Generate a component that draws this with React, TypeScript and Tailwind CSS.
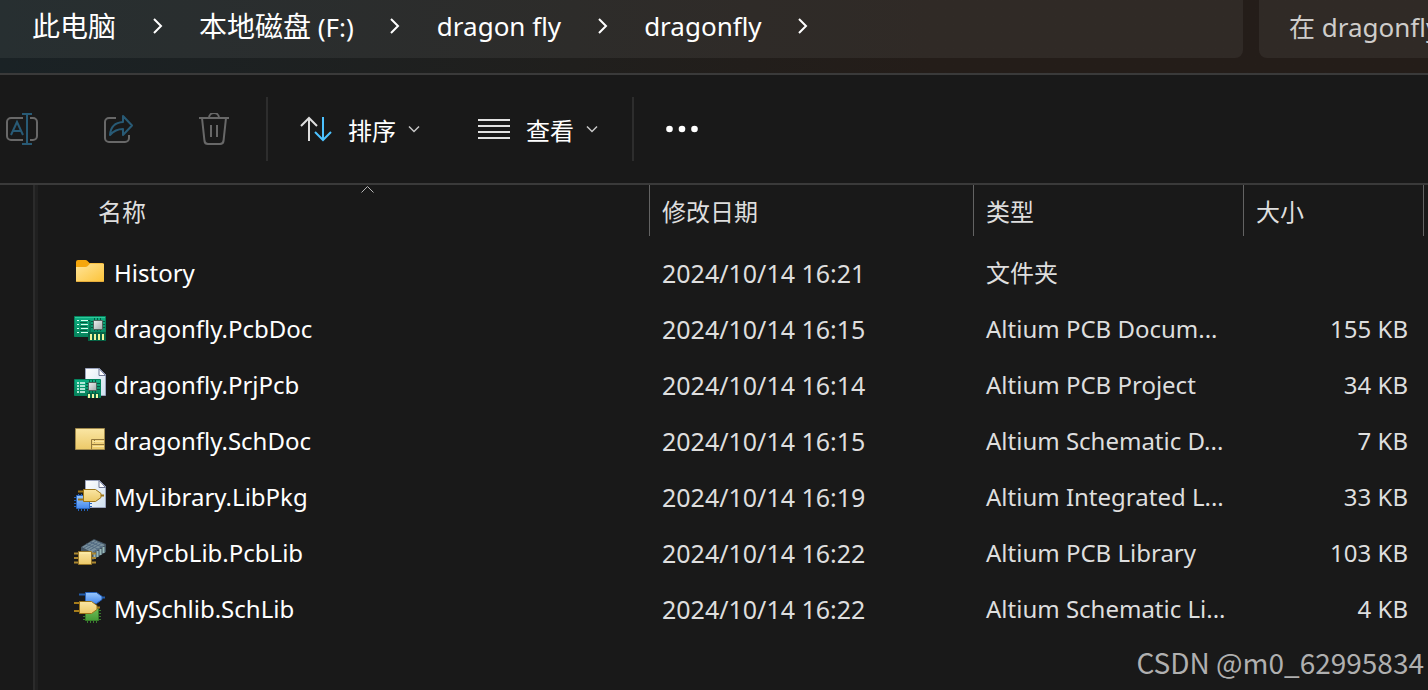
import React from 'react';

type IconName = 'folder' | 'pcbDoc' | 'project' | 'schDoc' | 'libPkg' | 'pcbLib' | 'schLib';

interface FileEntry {
  name: string;
  modified: string;
  type: string;
  size: string;
  icon: IconName;
}

const files: FileEntry[] = [
  { name: 'History', modified: '2024/10/14 16:21', type: '文件夹', size: '', icon: 'folder' },
  { name: 'dragonfly.PcbDoc', modified: '2024/10/14 16:15', type: 'Altium PCB Docum...', size: '155 KB', icon: 'pcbDoc' },
  { name: 'dragonfly.PrjPcb', modified: '2024/10/14 16:14', type: 'Altium PCB Project', size: '34 KB', icon: 'project' },
  { name: 'dragonfly.SchDoc', modified: '2024/10/14 16:15', type: 'Altium Schematic D...', size: '7 KB', icon: 'schDoc' },
  { name: 'MyLibrary.LibPkg', modified: '2024/10/14 16:19', type: 'Altium Integrated L...', size: '33 KB', icon: 'libPkg' },
  { name: 'MyPcbLib.PcbLib', modified: '2024/10/14 16:22', type: 'Altium PCB Library', size: '103 KB', icon: 'pcbLib' },
  { name: 'MySchlib.SchLib', modified: '2024/10/14 16:22', type: 'Altium Schematic Li...', size: '4 KB', icon: 'schLib' },
];

const Page = () => (
  <>
    <path d="M11.5.5h14l6 6v21h-20z" fill="url(#paper)" stroke="#9aa3bd" />
    <path d="M25 .5v7h6.5z" fill="#fff" stroke="#6f7896" />
  </>
);

const fileIcons: Record<IconName, React.ReactNode> = {
  folder: (
    <>
      <path d="M2 6a2 2 0 0 1 2-2h7.5c.8 0 1.300.3 1.800.8L15.500 7H28a2 2 0 0 1 2 2v4H2z" fill="#f5a60c" />
      <path d="M2 11h9.500c.8 0 1.400-.3 2-.8l2.200-2.200c.4-.4.8-.5 1.300-.5H29a1 1 0 0 1 1 1V25a1 1 0 0 1-1 1H3a1 1 0 0 1-1-1z" fill="url(#folderFront)" />
      <path d="M2.500 25.500h27" stroke="#e7ad3c" />
    </>
  ),
  pcbDoc: (
    <>
      <path d="M.5 4.500h31v24h-17v-4H.5z" fill="url(#board)" stroke="#04845e" />
      <path d="M1 5.500h30" stroke="#31c89a" />
      <path d="M3 8.500h2M3 12.500h2M3 16.500h2M3 20.500h2M7 8.500h7M7 12.500h7M7 16.500h7M7 20.500h7" stroke="#d9fff0" />
      <path d="M14 8.500h2v12h-2M6 10.500h7M6 14.500h7M6 18.500h7" stroke="#035c40" fill="none" />
      <path d="M17 9.500h14M17 12.500h14M17 15.500h14M20.500 6v13M23.500 6v13M26.500 6v13" stroke="#045a40" />
      <path d="M19.500 8.500h9v9h-9z" fill="url(#silver)" stroke="#50665e" />
      <path d="M14 20h18v9H14z" fill="#066345" />
      <path d="M17 22v6M21 22v6M25 22v6M29 22v6" stroke="#edf39a" strokeWidth="2" />
    </>
  ),
  project: (
    <>
      <Page />
      <path d="M.5 11.500h26v18h-13v-2H.5z" fill="url(#board)" stroke="#04845e" />
      <path d="M3 15h2M3 18h2M3 21h2M3 24h2M6 15h5M6 18h5M6 21h5M6 24h5" stroke="#e7fff6" strokeWidth="1.500" />
      <path d="M12 15.500h14M12 18.500h14M12 21.500h14M15.500 12v13M18.500 12v13M21.500 12v13" stroke="#045a40" />
      <path d="M14.500 14.500h8v8h-8z" fill="url(#silver)" stroke="#50665e" />
      <path d="M13 25h12v5H13z" fill="#066345" />
      <path d="M15 26v4M19 26v4M23 26v4" stroke="#f2f6a6" strokeWidth="2" />
    </>
  ),
  schDoc: (
    <>
      <path d="M1.500 4.500h29v21h-29z" fill="url(#gold)" stroke="#a18a4c" />
      <path d="M17.500 25.500v-10h13M17.500 20.500h13M20.500 18.500v-3" fill="none" stroke="#94793c" />
      <path d="M19 17.500h11M19 22.500h11" stroke="#f9e6a3" />
    </>
  ),
  libPkg: (
    <>
      <Page />
      <path d="M4.500 14v17M7.500 14v17M10.500 14v17M13.500 14v17M0 17.500h18M0 20.500h18M0 23.500h18M0 26.500h18" stroke="#2462b8" />
      <path d="M2.500 15.500h13v13h-13z" fill="url(#blue)" stroke="#2864bd" />
      <path d="M4 11.500h7M4 19.500h7M25 15.500h5" stroke="#9b7418" strokeWidth="2" />
      <path d="M9.500 9.500h12l5.500 4v4l-5.500 4h-12z" fill="url(#gold)" stroke="#9b7418" />
    </>
  ),
  pcbLib: (
    <>
      <path d="M7 11 20 3l12 5v8l-13 8-12-6z" fill="#435361" />
      <path d="m8 11 12-7 11 5-12 8z" fill="#79909c" />
      <path d="m10 12 12-7m-9 8 12-7m-9 8 12-7m-9 9 10-6M16 6l12 5M12 8l12 5" stroke="#536b83" />
      <path d="M20.500 17v6M23.500 15v6M26.500 13v6M29.500 11v6" stroke="#96b7b7" strokeWidth="2" />
      <path d="M0 17.500h22M0 22h22M0 26.500h22" stroke="#ab8730" strokeWidth="2" />
      <path d="M4.500 15.500h13v13h-13z" fill="url(#gold)" stroke="#967526" />
      <path d="M6 17h10" stroke="#fff0a8" />
    </>
  ),
  schLib: (
    <>
      <path d="M5 2.500h7M25 5.500h6" stroke="#225dac" strokeWidth="2" />
      <path d="M11.500.5h11l5.500 4v3l-5.500 4h-11z" fill="url(#blue)" stroke="#2864bd" />
      <path d="M13.500 15v16M16.500 15v16M19.500 15v16M22.500 15v16M9 18.500h18M9 21.500h18M9 24.500h18M9 27.500h18" stroke="#397b2e" />
      <path d="M11.500 16.500h13v12h-13z" fill="url(#green)" stroke="#367d29" />
      <path d="M0 11h7M0 19h7M20 15.500h6" stroke="#a77d1b" strokeWidth="2" />
      <path d="M5.500 9.500h12l5.500 4v4l-5.500 4h-12z" fill="url(#gold)" stroke="#9b7418" />
    </>
  ),
};

// gradients shared by all file icons
const IconDefs = () => (
  <svg className="absolute size-0" aria-hidden="true">
    <defs>
      <linearGradient id="paper" x2="1" y2="1"><stop stopColor="#fff" /><stop offset="1" stopColor="#cfe0ef" /></linearGradient>
      <linearGradient id="folderFront" x2="1" y2="1"><stop stopColor="#ffe59a" /><stop offset="1" stopColor="#fcc338" /></linearGradient>
      <linearGradient id="board" x2="0" y2="1"><stop stopColor="#0eb083" /><stop offset="1" stopColor="#067a54" /></linearGradient>
      <linearGradient id="silver" x2="1" y2="1"><stop stopColor="#eef0f0" /><stop offset="1" stopColor="#a3adad" /></linearGradient>
      <linearGradient id="gold" x2="0" y2="1"><stop stopColor="#fae6a4" /><stop offset="1" stopColor="#ecc968" /></linearGradient>
      <linearGradient id="blue" x2="0" y2="1"><stop stopColor="#9ac8fc" /><stop offset="1" stopColor="#4589ed" /></linearGradient>
      <linearGradient id="green" x2="0" y2="1"><stop stopColor="#70bd59" /><stop offset="1" stopColor="#459b36" /></linearGradient>
    </defs>
  </svg>
);

const Crumb = ({ children }: { children: React.ReactNode }) => (
  <button className="shrink-0 whitespace-nowrap leading-8">{children}</button>
);

const CrumbArrow = () => (
  <div className="flex w-[83px] shrink-0 justify-center">
    <svg className="h-4 w-3" viewBox="0 0 12 16" fill="none" stroke="#fff" strokeWidth="2">
      <path d="m2 1 7 7-7 7" />
    </svg>
  </div>
);

const ChevronDown = () => (
  <svg className="h-3 w-3" viewBox="0 0 12 12" fill="none" stroke="#c8c8c8" strokeWidth="1.500">
    <path d="m1 3.500 5 5 5-5" />
  </svg>
);

const AddressBar = () => (
  <header className="flex h-[75px] gap-4 border-b-2 border-[#3a3a3a] bg-linear-to-r from-[#1a2225] via-[#201f1d] via-40% to-[#241d19] to-65%">
    <nav className="flex h-[58px] min-w-0 flex-1 items-center rounded-br-lg bg-white/6 pb-1.5 pl-8 text-[26px] text-white">
      <Crumb><span className="text-[28px]">此电脑</span></Crumb>
      <CrumbArrow />
      <Crumb><span className="text-[28px]">本地磁盘</span> (F:)</Crumb>
      <CrumbArrow />
      <Crumb>dragon fly</Crumb>
      <CrumbArrow />
      <Crumb>dragonfly</Crumb>
      <CrumbArrow />
    </nav>
    <input
      type="text"
      aria-label="搜索"
      placeholder="在 dragonfly 中搜索"
      className="h-[58px] w-[169px] rounded-bl-lg bg-white/6 pb-1 pl-[30px] text-[26px] text-white outline-none placeholder:text-[#cfcdcb]"
    />
  </header>
);

const Toolbar = () => (
  <div className="flex h-[110px] items-center border-b-2 border-[#3a3a3a] pl-[6px] text-2xl text-white">
    <div className="flex gap-16">
      <button aria-label="重命名">
        <svg className="size-8" viewBox="0 0 32 32" fill="none" stroke="#686868" strokeWidth="2">
          <path d="M17 5H5a4 4 0 0 0-4 4v14a4 4 0 0 0 4 4h12M24 5h3a4 4 0 0 1 4 4v14a4 4 0 0 1-4 4h-3" />
          <path d="M16 1h10M21 1v30M16 31h10M5 22l6-13 6 13M7.500 18h7" stroke="#285a75" />
        </svg>
      </button>
      <button aria-label="共享">
        <svg className="size-8" viewBox="0 0 32 32" fill="none" stroke="#686868" strokeWidth="2" strokeLinejoin="round">
          <path d="M14 5H7a4 4 0 0 0-4 4v16a4 4 0 0 0 4 4h16a4 4 0 0 0 4-4v-3" />
          <path d="M21 3l9 9.500L21 22v-6c-6 0-9 1.500-13 6 .6-8 5-12.500 13-13z" stroke="#285a75" />
        </svg>
      </button>
      <button aria-label="删除">
        <svg className="size-8" viewBox="0 0 32 32" fill="none" stroke="#686868" strokeWidth="2">
          <path d="M1 5h30M11 5a5 5 0 0 1 10 0M4 5l2.500 23a3.500 3.500 0 0 0 3.500 3h12a3.500 3.500 0 0 0 3.500-3L28 5M13 12v12M19 12v12" />
        </svg>
      </button>
    </div>
    <div className="ml-9 h-16 w-0.5 bg-[#2d2d2d]" />
    <button className="ml-8 flex items-center">
      <svg className="size-8" viewBox="0 0 32 32" fill="none" stroke="#dedede" strokeWidth="2">
        <path d="M9 28V5M1 13l8-8 8 8" />
        <path d="M23 4v23M15 19l8 8 8-8" stroke="#4cc2ff" />
      </svg>
      <span className="mr-3 ml-4 pt-1">排序</span>
      <ChevronDown />
    </button>
    <button className="ml-[58px] flex items-center">
      <svg className="size-8" viewBox="0 0 32 32" stroke="#e2e2e2" strokeWidth="2">
        <path d="M0 7h32M0 13h32M0 19h32M0 25h32" />
      </svg>
      <span className="mr-3 ml-4 pt-1">查看</span>
      <ChevronDown />
    </button>
    <div className="ml-[34px] h-16 w-0.5 bg-[#2d2d2d]" />
    <button className="ml-8" aria-label="更多">
      <svg className="size-8" viewBox="0 0 32 32" fill="#fff">
        <circle cx="3.500" cy="16" r="3.300" />
        <circle cx="16" cy="16" r="3.300" />
        <circle cx="28.500" cy="16" r="3.300" />
      </svg>
    </button>
  </div>
);

const FileTable = () => (
  <table className="w-full table-fixed border-collapse text-left text-2xl whitespace-nowrap text-[#dedede]">
    <colgroup>
      <col />
      <col className="w-[324px]" />
      <col className="w-[270px]" />
      <col className="w-[180px]" />
    </colgroup>
    <thead>
      <tr>
        <th className="p-0 pb-2 font-normal">
          <div className="relative flex h-[51px] items-center border-r border-[#636363] pt-0.5 pl-[60px]">
            名称
            <svg className="absolute top-0 left-[322px] h-2 w-4" viewBox="0 0 16 8" fill="none" stroke="#b5b5b5">
              <path d="m1.500 7.500 6-6 6 6" />
            </svg>
          </div>
        </th>
        <th className="p-0 pb-2 font-normal">
          <div className="flex h-[51px] items-center border-r border-[#636363] pt-0.5 pl-3">修改日期</div>
        </th>
        <th className="p-0 pb-2 font-normal">
          <div className="flex h-[51px] items-center border-r border-[#636363] pt-0.5 pl-3">类型</div>
        </th>
        <th className="p-0 pb-2 font-normal">
          <div className="flex h-[51px] items-center border-r border-[#636363] pt-0.5 pl-3">大小</div>
        </th>
      </tr>
    </thead>
    <tbody>
      {files.map((file) => (
        <tr key={file.name} className="h-14">
          <td className="p-0 pl-9">
            <div className="flex items-center gap-2 text-white">
              <svg className="size-8 shrink-0" viewBox="0 0 32 32" aria-hidden="true">
                {fileIcons[file.icon]}
              </svg>
              <span className="pt-0.5">{file.name}</span>
            </div>
          </td>
          <td className="p-0 pt-0.5 pl-3 text-[25px] leading-8">{file.modified}</td>
          <td className="p-0 pt-0.5 pl-3">{file.type}</td>
          <td className="p-0 pt-0.5 pr-4 text-right">{file.size}</td>
        </tr>
      ))}
    </tbody>
  </table>
);

export default function App() {
  return (
    <div className="relative flex min-h-screen flex-col overflow-hidden bg-[#191919] font-['Noto_Sans','Noto_Sans_CJK_SC',sans-serif]">
      <IconDefs />
      <AddressBar />
      <Toolbar />
      <main className="flex flex-1">
        <aside className="w-[35px] shrink-0 border-r-2 border-[#2b2b2b]" />
        <div className="min-w-0 flex-1 border-l-3 border-[#202020] pr-1">
          <FileTable />
        </div>
      </main>
      <p className="absolute right-1 bottom-2 font-['Noto_Sans_CJK_SC',sans-serif] text-[28px] leading-10 text-[#b0b0b0]">
        CSDN @m0_62995834
      </p>
    </div>
  );
}
